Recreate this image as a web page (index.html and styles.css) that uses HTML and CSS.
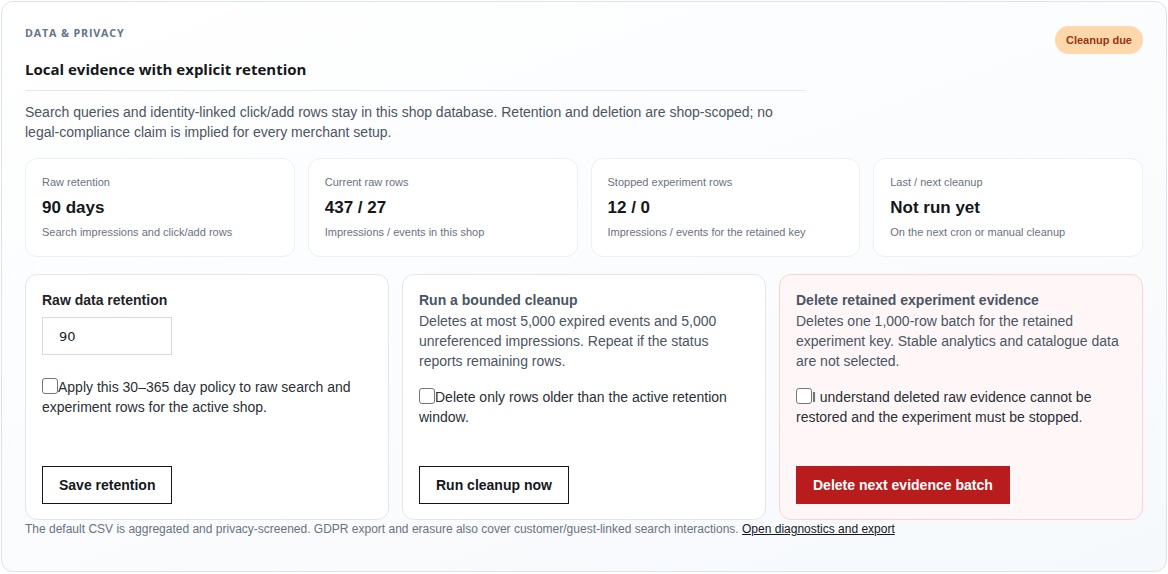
FILE: index.html
```html
<!DOCTYPE html>
<html lang="en">
<head>
<meta charset="utf-8">
<title>Data &amp; privacy</title>
<link rel="stylesheet" href="styles.css">
</head>
<body>
<section class="panel">
  <header class="panel-head">
    <div class="head-text">
      <p class="eyebrow">DATA &amp; PRIVACY</p>
      <h2 class="title">Local evidence with explicit retention</h2>
    </div>
    <span class="badge">Cleanup due</span>
  </header>
  <p class="intro">Search queries and identity-linked click/add rows stay in this shop database. Retention and deletion are shop-scoped; no legal-compliance claim is implied for every merchant setup.</p>

  <div class="stats">
    <div class="stat">
      <p class="stat-label">Raw retention</p>
      <p class="stat-value">90 days</p>
      <p class="stat-sub">Search impressions and click/add rows</p>
    </div>
    <div class="stat">
      <p class="stat-label">Current raw rows</p>
      <p class="stat-value">437 / 27</p>
      <p class="stat-sub">Impressions / events in this shop</p>
    </div>
    <div class="stat">
      <p class="stat-label">Stopped experiment rows</p>
      <p class="stat-value">12 / 0</p>
      <p class="stat-sub">Impressions / events for the retained key</p>
    </div>
    <div class="stat">
      <p class="stat-label">Last / next cleanup</p>
      <p class="stat-value">Not run yet</p>
      <p class="stat-sub">On the next cron or manual cleanup</p>
    </div>
  </div>

  <div class="actions">
    <form class="action">
      <label class="action-title dark" for="days">Raw data retention</label>
      <input class="days-input" id="days" type="text" value="90">
      <label class="check check-first"><input type="checkbox">Apply this 30–365 day policy to raw search and experiment rows for the active shop.</label>
      <button class="btn" type="button">Save retention</button>
    </form>
    <form class="action">
      <h3 class="action-title">Run a bounded cleanup</h3>
      <p class="action-desc">Deletes at most 5,000 expired events and 5,000 unreferenced impressions. Repeat if the status reports remaining rows.</p>
      <label class="check"><input type="checkbox">Delete only rows older than the active retention window.</label>
      <button class="btn" type="button">Run cleanup now</button>
    </form>
    <form class="action danger">
      <h3 class="action-title">Delete retained experiment evidence</h3>
      <p class="action-desc">Deletes one 1,000-row batch for the retained experiment key. Stable analytics and catalogue data are not selected.</p>
      <label class="check"><input type="checkbox">I understand deleted raw evidence cannot be restored and the experiment must be stopped.</label>
      <button class="btn btn-danger" type="button">Delete next evidence batch</button>
    </form>
  </div>

  <p class="note">The default CSV is aggregated and privacy-screened. GDPR export and erasure also cover customer/guest-linked search interactions. <a href="#">Open diagnostics and export</a></p>
</section>
</body>
</html>
```

FILE: styles.css
```css
*{margin:0;padding:0;box-sizing:border-box;}
body{padding:1px;background:#fff;font-family:"Liberation Sans",Arial,sans-serif;color:#1f2328;}

.panel
{
	min-height:571px;
	padding:23px 23px 0;
	border:1px solid #dde3eb;
	border-radius:12px;
	background:linear-gradient(160deg,#ffffff 0%,#f6f9fc 100%);
}

/* header */
.panel-head{display:flex;justify-content:space-between;align-items:flex-start;}
.head-text{width:780px;padding-bottom:11px;border-bottom:1px solid #e5e9ef;}
.eyebrow
{
	font-family:"Open Sans",sans-serif;
	font-size:10.7px;
	line-height:16px;
	font-weight:700;
	letter-spacing:0.08em;
	color:#64748b;
}
.title
{
	margin-top:18px;
	font-family:"Open Sans",sans-serif;
	font-size:15px;
	line-height:20px;
	font-weight:700;
	color:#15171c;
}
.badge
{
	margin-top:1px;
	padding:0 11px;
	height:28px;
	line-height:28px;
	border-radius:14px;
	background:#fed7aa;
	color:#9a3412;
	font-size:11px;
	font-weight:700;
}
.intro{max-width:780px;margin-top:11px;font-size:14px;line-height:20px;color:#4b5563;}

/* stat cards */
.stats{display:grid;grid-template-columns:repeat(4,1fr);gap:13px;margin-top:16px;}
.stat
{
	padding:16px 16px 17px;
	border:1px solid #edf0f4;
	border-radius:12px;
	background:#fff;
}
.stat-label,.stat-sub{font-size:11px;line-height:14px;color:#6b7280;}
.stat-value{margin:8px 0 6px;font-size:17px;line-height:22px;font-weight:700;color:#15171c;}

/* action cards */
.actions{display:grid;grid-template-columns:repeat(3,1fr);gap:13px;margin-top:17px;}
.action
{
	display:flex;
	flex-direction:column;
	align-items:flex-start;
	height:246px;
	padding:15px 16px;
	border:1px solid #e3e7ed;
	border-radius:12px;
	background:#fff;
}
.action.danger{background:#fff7f7;border-color:#fbd3d3;}
.action-title{display:block;font-size:14px;line-height:20px;font-weight:700;color:#4a5565;}
.action-title.dark{color:#1f2328;}
.action-desc{margin-top:1px;font-size:14px;line-height:20px;color:#4b5563;}
.days-input
{
	margin-top:7px;
	width:130px;
	height:38px;
	padding:0 16px;
	border:1px solid #d6dae0;
	font-family:"DejaVu Sans",sans-serif;
	font-size:13px;
	color:#222;
	background:#fff;
}
.check{display:block;margin-top:16px;font-size:14px;line-height:20px;color:#2b2f36;}
.check-first{margin-top:22px;}
.check input
{
	-webkit-appearance:none;
	appearance:none;
	width:16px;
	height:16px;
	margin:0;
	border:1px solid #767676;
	border-radius:3px;
	background:#fff;
	vertical-align:-2px;
}
.btn
{
	margin-top:auto;
	height:38px;
	padding:0 16px;
	border:1px solid #15171c;
	background:#fff;
	font-family:"Liberation Sans",Arial,sans-serif;
	font-size:14px;
	font-weight:700;
	color:#15171c;
}
.btn-danger{background:#b91c1c;border-color:#b91c1c;color:#fff;}

.note{margin-top:1px;font-size:12px;line-height:16px;color:#6b7280;}
.note a{color:#15171c;}
```
